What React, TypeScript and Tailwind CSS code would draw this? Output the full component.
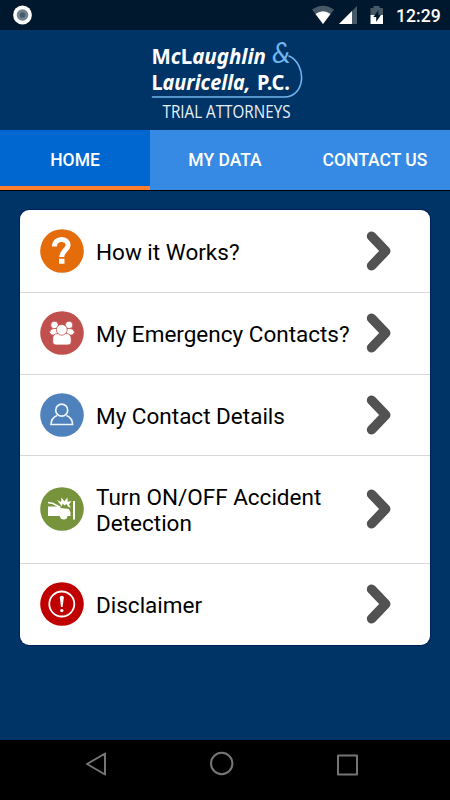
import type { ReactNode } from 'react';

const StatusBar = () => (
  <div className="h-[30px] bg-[#00182d] flex items-center justify-between">
    <svg width="46" height="30" viewBox="0 0 46 30">
      <circle cx="22.5" cy="15" r="9.4" fill="#fff" />
      <circle cx="22.5" cy="15" r="5.8" fill="#718390" />
      <circle cx="22.5" cy="15" r="2.7" fill="#455a69" />
    </svg>
    <div className="flex items-center">
      <svg width="84" height="30" viewBox="0 0 84 30">
        {/* wifi */}
        <path d="M0 9.5 Q11 1.8 22 9.5 L11 24 Z" fill="#475867" />
        <path d="M3.5 14 Q11 8.5 18.5 14 L11 24 Z" fill="#fff" />
        {/* signal */}
        <path d="M45 6 V24 H27 Z" fill="#475867" />
        <path d="M40 11 V24 H27 Z" fill="#fff" />
        {/* battery */}
        <path d="M61.5 6 H67.5 V8 H71 V15.5 H58.5 V8 H61.5 Z" fill="#475867" />
        <path d="M58.5 15 H71 V24 H58.5 Z" fill="#fff" />
        <path d="M66.5 10 L61.3 17 H64.2 V22 L69 14.8 H66.2 Z" fill="#00182d" />
      </svg>
      <span className="w-[54px] pt-px text-[17.6px] leading-[30px] font-medium text-white">12:29</span>
    </div>
  </div>
);

const Logo = () => (
  <div className="h-[100px] flex justify-center">
    <svg width="170" height="100" viewBox="0 0 170 100" fill="#fff">
      <g fontFamily="'Noto Sans', sans-serif" fontWeight="bold" fontSize="21">
        <text x="11.5" y="34" textLength="114.5" lengthAdjust="spacingAndGlyphs">
          M<tspan fontStyle="italic">c</tspan>L<tspan fontStyle="italic">aughlin</tspan>
        </text>
        <text x="11.5" y="60" textLength="99" lengthAdjust="spacingAndGlyphs">
          L<tspan fontStyle="italic">auricella,</tspan>
        </text>
        <text x="117" y="60" textLength="33" lengthAdjust="spacingAndGlyphs">P.C.</text>
      </g>
      <text x="132" y="32.5" fontFamily="'Lato', sans-serif" fontStyle="italic" fontSize="28" fill="#70b5ee">
        &amp;
      </text>
      <path d="M149 26 C167 34 166 67 144 67 H12.5" fill="none" stroke="#70b5ee" strokeWidth="1.6" strokeLinecap="round" />
      <text
        x="22.5"
        y="87.5"
        fontFamily="'Open Sans', sans-serif"
        fontSize="17.5"
        textLength="128"
        lengthAdjust="spacingAndGlyphs"
        fill="#e8f0fa"
      >
        TRIAL ATTORNEYS
      </text>
    </svg>
  </div>
);

const Tabs = () => (
  <nav className="h-[61px] grid grid-cols-3 bg-[#368ae3] border-b border-black text-[17.5px] font-medium text-white text-center leading-[61px] whitespace-nowrap">
    <div className="bg-[#0067d0] border-b-4 border-[#ff7d2e] h-[60px]">HOME</div>
    <div>MY DATA</div>
    <div>CONTACT US</div>
  </nav>
);

const QuestionIcon = () => (
  <path d="M14.5 17.5 C14.5 8 28.5 8.5 28 16.5 C27.5 21.5 21.8 21.5 21.8 28 M19 32.2 H24.5" fill="none" stroke="#fff" strokeWidth="5" />
);

const PeopleIcon = () => (
  <g fill="#fff" stroke="#c0504d" strokeWidth="0.8">
    <circle cx="14.5" cy="14" r="3.8" />
    <circle cx="29" cy="14" r="3.8" />
    <path d="M9.5 21.5 Q10 17.5 14 17.5 H18 V24 H11.5 Z" />
    <path d="M34.5 21.5 Q34 17.5 30 17.5 H26 V24 H32.5 Z" />
    <path d="M12.7 31 V28 Q12.7 22.5 18 22.5 H26 Q31.2 22.5 31.2 28 V31 Q31.2 34 28 34 H16 Q12.7 34 12.7 31 Z" />
    <circle cx="21.8" cy="18.8" r="5.4" />
  </g>
);

const PersonIcon = () => (
  <g fill="none" stroke="#eef4fb" strokeWidth="1.7">
    <circle cx="21.7" cy="17.2" r="6" />
    <path d="M17 22.5 Q11.2 25 11 31.5 H32.6 Q32.4 25 26.5 22.5" />
  </g>
);

const CrashIcon = () => (
  <g fill="#fff">
    <path d="M8 19.5 H18 L20.5 21 L29 22 L30.5 25.5 V29 H27.5 Q27 32.5 23.8 32.5 Q20.5 32.5 19.8 29 H8 Z" />
    <path d="M8 15.5 L13 16.5 L20.5 20.5" fill="none" stroke="#fff" strokeWidth="1.5" />
    <path d="M20 17 L17 13 L21 15 L21.5 10.5 L24.3 14.2 L27.5 10.5 L27.7 14.7 L31.5 14 L29 17.5 L31 20.8 L27.8 19.5 L26.8 17 L24.5 18.5 L22.7 16.6 L21.8 19.5 Z" />
    <path d="M33 14 H35 V32.5 H33 Z" />
  </g>
);

const AlertIcon = () => (
  <g fill="#fff">
    <circle cx="21.8" cy="22" r="12.5" fill="none" stroke="#fff" strokeWidth="1.8" />
    <path d="M19.8 15.5 Q19.8 13.8 21.8 13.8 Q23.8 13.8 23.8 15.5 L22.6 25 H21 Z" />
    <circle cx="21.8" cy="28.6" r="1.7" />
  </g>
);

const items: { label: string; color: string; size: string; icon: ReactNode }[] = [
  { label: 'How it Works?', color: '#e46c0a', size: 'h-[83px]', icon: <QuestionIcon /> },
  { label: 'My Emergency Contacts?', color: '#c0504d', size: 'h-[82px] pb-px', icon: <PeopleIcon /> },
  { label: 'My Contact Details', color: '#4f81bd', size: 'h-[81px]', icon: <PersonIcon /> },
  { label: 'Turn ON/OFF Accident Detection', color: '#77933c', size: 'h-[108px] pb-px', icon: <CrashIcon /> },
  { label: 'Disclaimer', color: '#c00000', size: 'h-[81px] pb-px', icon: <AlertIcon /> },
];

const Chevron = () => (
  <svg width="26" height="40" viewBox="0 0 26 40" className="shrink-0">
    <path d="M5.6 5.3 L19.7 20 L5.6 34.7" fill="none" stroke="#525252" strokeWidth="9.6" strokeLinecap="round" strokeLinejoin="round" />
  </svg>
);

const NavBar = () => (
  <div className="h-[60px] bg-black">
    <svg width="450" height="60" viewBox="0 0 450 60" fill="none" stroke="#757575" strokeWidth="2" strokeLinejoin="round">
      <path d="M105 13.5 V34.5 L87 24 Z" />
      <circle cx="221.7" cy="23.5" r="10.7" />
      <path d="M338 15.5 H357 V34.5 H338 Z" />
    </svg>
  </div>
);

const App = () => {
  return (
    <div className="w-[450px] h-[800px] flex flex-col overflow-hidden bg-[#003466] font-['Roboto',sans-serif]">
      <StatusBar />
      <Logo />
      <Tabs />
      <main className="flex-1 px-5 pt-[19px]">
        <div className="rounded-[9px] bg-white ring-1 ring-[#00205c] overflow-hidden">
          {items.map((item) => (
            <div
              key={item.label}
              className={`${item.size} flex items-center border-b border-[#d8d8d8] last:border-b-0 pl-5`}
            >
              <svg width="44" height="44" viewBox="0 0 44 44" className="shrink-0">
                <circle cx="22" cy="22" r="21.8" fill={item.color} />
                {item.icon}
              </svg>
              <span className="w-[282px] shrink-0 pt-0.5 pl-3 pr-3 text-[22.5px] leading-[26px] text-black">
                {item.label}
              </span>
              <Chevron />
            </div>
          ))}
        </div>
      </main>
      <NavBar />
    </div>
  );
};

export default App;
